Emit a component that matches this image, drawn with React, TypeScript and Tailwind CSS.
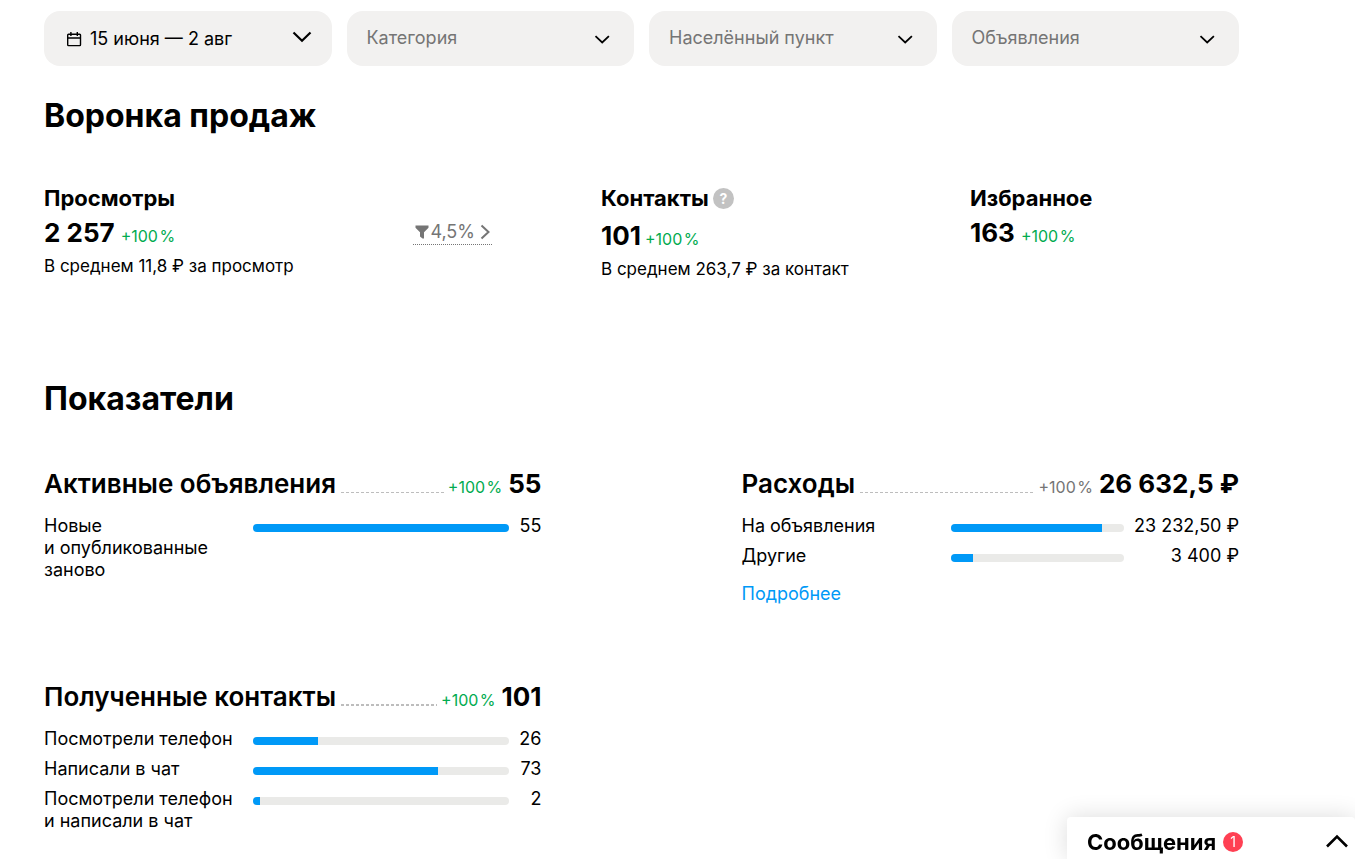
import React from "react";

interface Row {
  label: React.ReactNode;
  name: string;
  value: string;
  percent: number;
}

interface IndicatorProps {
  title: string;
  total: string;
  growthClass?: string;
  lineClass?: string;
  rows: Row[];
  children?: React.ReactNode;
}

const GROWTH = "+100\u200a%";

const activeRows: Row[] = [
  {
    label: (
      <>
        Новые
        <br />и опубликованные
        <br />
        заново
      </>
    ),
    name: "Новые и опубликованные заново",
    value: "55",
    percent: 100,
  },
];

const expenseRows: Row[] = [
  { label: "На объявления", name: "На объявления", value: "23 232,50 ₽", percent: 87.2 },
  { label: "Другие", name: "Другие", value: "3 400 ₽", percent: 12.8 },
];

const contactRows: Row[] = [
  { label: "Посмотрели телефон", name: "Посмотрели телефон", value: "26", percent: 25.5 },
  { label: "Написали в чат", name: "Написали в чат", value: "73", percent: 72.3 },
  {
    label: (
      <>
        Посмотрели телефон
        <br />и написали в чат
      </>
    ),
    name: "Посмотрели телефон и написали в чат",
    value: "2",
    percent: 2.6,
  },
];

const CalendarIcon = () => (
  <svg className="size-4 shrink-0" viewBox="0 0 16 16" fill="none" stroke="currentColor" strokeWidth="1.4">
    <rect x="1.7" y="3.2" width="12.8" height="11.4" rx="0.8" />
    <path d="M1.7 7h12.8M4.900 1v4M11.300 1v4" />
  </svg>
);

const FunnelIcon = () => (
  <svg className="w-3.5 h-3.5 shrink-0" viewBox="0 0 14 14" fill="currentColor">
    <path d="M0.5 0.5h13v2.200L9 7.200v6.300H7.500L5 11.500V7.200L0.500 2.700z" />
  </svg>
);

const Select = ({ label }: { label: string }) => (
  <div className="grid items-center h-[55px] rounded-[16px] bg-[#f2f1f0]">
    <select
      aria-label={label}
      defaultValue=""
      className="col-start-1 row-start-1 h-full w-full appearance-none rounded-[16px] bg-transparent pl-5 pr-12 pb-0.5 text-lg text-[#757575]"
    >
      <option value="">{label}</option>
    </select>
    <svg
      className="col-start-1 row-start-1 justify-self-end mr-6 w-4 h-4 pointer-events-none"
      viewBox="0 0 16 16"
      fill="none"
      stroke="currentColor"
      strokeWidth="1.8"
    >
      <path d="M1.500 5.200L8.200 11.400l6.700-6.200" />
    </svg>
  </div>
);

const Growth = ({ className = "text-[#02ab50]" }: { className?: string }) => (
  <span className={`text-base whitespace-nowrap ${className}`}>{GROWTH}</span>
);

const Indicator: React.FC<IndicatorProps> = ({
  title,
  total,
  growthClass,
  lineClass = "h-px",
  rows,
  children,
}) => (
  <section>
    <div className="flex items-baseline h-9 leading-9">
      <h3 className="text-[26px] font-semibold whitespace-nowrap">{title}</h3>
      <span
        className={`flex-1 ml-[5px] mr-1 bg-[repeating-linear-gradient(90deg,#bdbdbd_0_3px,transparent_3px_5px)] ${lineClass}`}
      />
      <Growth className={growthClass} />
      <span className="ml-1.5 text-[26px] font-bold whitespace-nowrap">{total}</span>
    </div>
    <ul className="mt-[13px] flex flex-col gap-2 text-lg leading-[22px]">
      {rows.map((row) => (
        <li key={row.name} className="flex items-start">
          <span className="w-[209px] shrink-0 whitespace-nowrap">{row.label}</span>
          <div
            role="progressbar"
            aria-label={row.name}
            aria-valuenow={row.percent}
            className="flex-1 mt-[9px] h-2 rounded-full bg-[#eaeae8] overflow-hidden"
          >
            <div className="h-full bg-[#0099f7]" style={{ width: `${row.percent}%` }} />
          </div>
          <span
            className={`ml-2.5 text-right whitespace-nowrap ${row.value.includes("₽") ? "w-[105px]" : "w-[23px]"}`}
          >
            {row.value}
          </span>
        </li>
      ))}
    </ul>
    {children}
  </section>
);

const App: React.FC = () => {
  return (
    <div className="min-h-screen bg-white text-black font-['Inter',sans-serif]">
      <main className="pt-[11px] pl-11 pr-[116px]">
        <div className="grid grid-cols-4 gap-[15px]">
          <button
            type="button"
            className="flex items-center h-[55px] rounded-[16px] bg-[#f2f1f0] pl-[22px] pr-5 text-lg"
          >
            <CalendarIcon />
            <span className="ml-2 whitespace-nowrap">15 июня — 2 авг</span>
            <svg
              className="ml-auto mb-1 w-5 h-5"
              viewBox="0 0 20 20"
              fill="none"
              stroke="currentColor"
              strokeWidth="2.2"
            >
              <path d="M1.500 5.500L10 13.800l8.500-8.300" />
            </svg>
          </button>
          <Select label="Категория" />
          <Select label="Населённый пункт" />
          <Select label="Объявления" />
        </div>

        <h2 className="mt-[30px] text-[32px] leading-10 font-bold">Воронка продаж</h2>
        <div className="mt-[46px] grid grid-cols-[557fr_369fr_269fr]">
          <section className="flex items-start justify-between pr-[109px]">
            <div>
              <h3 className="text-[22px] leading-8 font-bold">Просмотры</h3>
              <p className="mt-px flex items-baseline gap-1.5 leading-9">
                <span className="text-[26px] font-bold">2 257</span>
                <Growth />
              </p>
              <p className="mt-[3px] text-[17px] leading-6">В среднем 11,8 ₽ за просмотр</p>
            </div>
            <a
              href="#conversion"
              className="mt-[37px] flex items-center h-[26px] px-0.5 border-b border-dotted border-[#757575] text-lg text-[#757575]"
            >
              <FunnelIcon />
              <span className="ml-px">4,5%</span>
              <svg
                className="ml-[5px] w-2.5 h-4"
                viewBox="0 0 10 16"
                fill="none"
                stroke="currentColor"
                strokeWidth="2"
              >
                <path d="M1.500 1.500L8.500 8l-7 6.500" />
              </svg>
            </a>
          </section>
          <section>
            <div className="flex items-center gap-1 h-8">
              <h3 className="text-[22px] leading-8 font-bold">Контакты</h3>
              <button
                type="button"
                aria-label="Подсказка"
                className="size-[21px] rounded-full bg-[#c2c2c2] text-white text-sm leading-[21px] font-bold"
              >
                ?
              </button>
            </div>
            <p className="mt-1 flex items-baseline gap-1 leading-9">
              <span className="text-[26px] font-bold">101</span>
              <Growth />
            </p>
            <p className="mt-[3px] text-[17px] leading-6">В среднем 263,7 ₽ за контакт</p>
          </section>
          <section>
            <h3 className="text-[22px] leading-8 font-bold">Избранное</h3>
            <p className="mt-px flex items-baseline gap-1.5 leading-9">
              <span className="text-[26px] font-bold">163</span>
              <Growth />
            </p>
          </section>
        </div>

        <h2 className="mt-[98px] text-[32px] leading-10 font-bold">Показатели</h2>
        <div className="mt-[47px] grid grid-cols-2 gap-x-[200px] gap-y-[74px]">
          <Indicator title="Активные объявления" total="55" rows={activeRows} />
          <Indicator title="Расходы" total="26 632,5 ₽" growthClass="text-[#757575]" rows={expenseRows}>
            <a href="#expenses" className="mt-4 block text-lg leading-[22px] text-[#0099f7]">
              Подробнее
            </a>
          </Indicator>
          <Indicator
            title="Полученные контакты"
            total="101"
            lineClass="h-0.5"
            rows={contactRows}
          />
        </div>
      </main>

      <button
        type="button"
        className="fixed bottom-0 right-0 flex items-center w-[288px] h-[42px] pt-2 pl-5 pr-[7px] rounded-t bg-white shadow-[0_0_24px_rgba(0,0,0,0.14)]"
      >
        <span className="text-[22px] font-bold">Сообщения</span>
        <span className="ml-[7px] size-5 rounded-full bg-[#ff4053] text-white text-sm leading-5">1</span>
        <svg
          className="ml-auto w-[22px] h-4"
          viewBox="0 0 22 16"
          fill="none"
          stroke="currentColor"
          strokeWidth="2.6"
        >
          <path d="M1 12.500L11 2.500l10 10" />
        </svg>
      </button>
    </div>
  );
};

export default App;
